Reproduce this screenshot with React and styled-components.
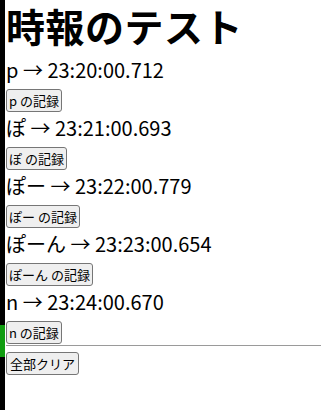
import React from 'react'
import styled, { createGlobalStyle } from 'styled-components'

const GlobalStyle = createGlobalStyle`
  html, body {
    margin: 0;
    padding: 0;
    background: #ffffff;
  }
  body {
    font-family: "Noto Sans CJK JP", "Noto Sans", sans-serif;
    color: #000;
  }
`;

const Page = styled.div`
  display: flex;
  min-height: 410px;
`;

const Strip = styled.div`
  width: 5px;
  flex: none;
  background: linear-gradient(
    to bottom,
    #000 0px,
    #000 325px,
    #109c10 325px,
    #109c10 357px,
    #000 357px
  );
`;

const Main = styled.div`
  flex: 1;
  padding-left: 1px;
  display: flex;
  flex-direction: column;
  align-items: flex-start;
`;

const Title = styled.h1`
  margin: 0 0 4px;
  font-size: 39px;
  line-height: 50px;
  font-weight: 700;
  letter-spacing: 0.5px;
`;

const Line = styled.div`
  font-size: 20px;
  line-height: 32px;
  padding-bottom: 3px;
`;

const RecordButton = styled.button`
  height: 23px;
  padding: 0 2px;
  font-family: inherit;
  font-size: 13px;
  line-height: 21px;
  color: #000;
  background: #efefef;
  border: 1px solid #767676;
  border-radius: 3px;
`;

const Rule = styled.hr`
  align-self: stretch;
  margin: 1px 0 6px;
  border: none;
  border-top: 1px solid #9a9a9a;
`;

const ClearButton = styled(RecordButton)`
  padding: 0 3px;
`;

const records = [
  { label: 'p', time: '23:20:00.712' },
  { label: 'ぽ', time: '23:21:00.693' },
  { label: 'ぽー', time: '23:22:00.779' },
  { label: 'ぽーん', time: '23:23:00.654' },
  { label: 'n', time: '23:24:00.670' },
]

export default function App() {
  return (
    <>
      <GlobalStyle />
      <Page>
        <Strip />
        <Main>
          <Title>時報のテスト</Title>
          {records.map((r) => (
            <React.Fragment key={r.label}>
              <Line>{r.label} → {r.time}</Line>
              <RecordButton>{r.label} の記録</RecordButton>
            </React.Fragment>
          ))}
          <Rule />
          <ClearButton>全部クリア</ClearButton>
        </Main>
      </Page>
    </>
  )
}
